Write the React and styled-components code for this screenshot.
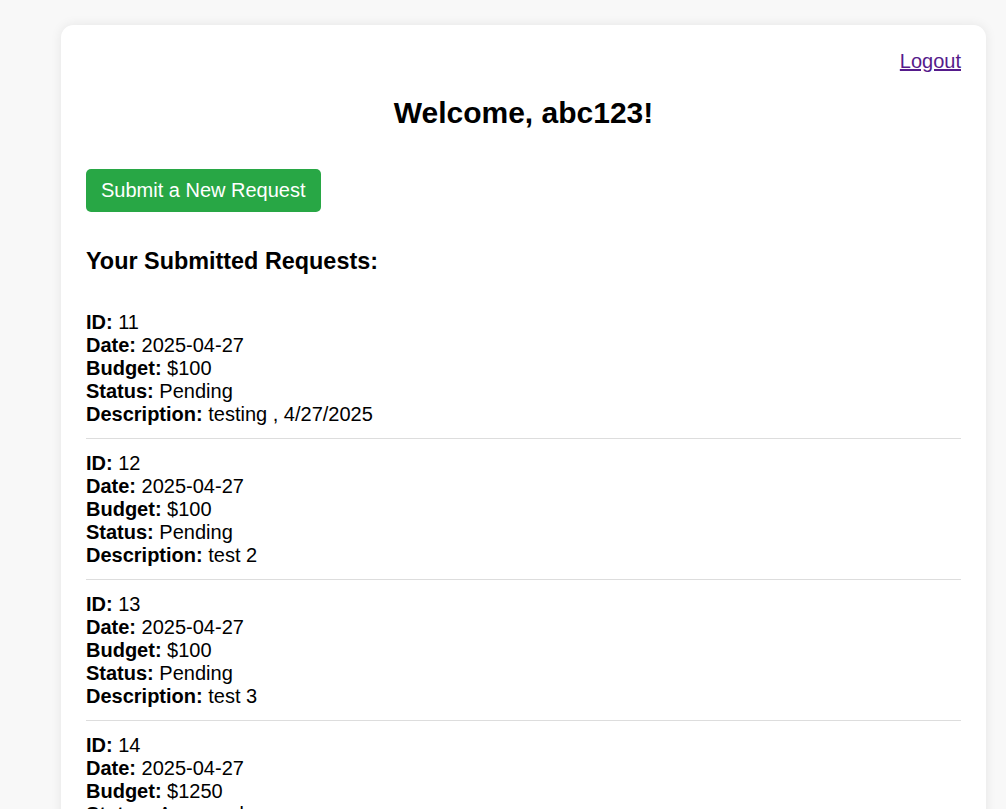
import styled, { createGlobalStyle } from "styled-components";

const GlobalStyle = createGlobalStyle`
  body {
    margin: 0;
    background: #f8f8f8;
    font-family: "Liberation Sans", Arial, sans-serif;
    font-size: 20px;
    color: #000;
  }
`;

const Page = styled.div`
  padding: 25px 20px 0 61px;
`;

const Card = styled.div`
  background: #fff;
  border-radius: 12.5px;
  box-shadow: 0 0 12px rgba(0, 0, 0, 0.08);
  padding: 25px;
  min-height: 900px;
`;

const TopBar = styled.div`
  display: flex;
  justify-content: flex-end;
`;

const LogoutLink = styled.a`
  color: #551a8b;
  text-decoration: underline;
  cursor: pointer;
`;

const Heading = styled.h2`
  text-align: center;
  font-size: 30px;
  margin: 22.5px 0 0;
`;

const SubmitButton = styled.button`
  margin-top: 39px;
  background: #28a745;
  color: #fff;
  border: none;
  border-radius: 5px;
  padding: 10px 15px;
  font-family: inherit;
  font-size: 20px;
  line-height: 23px;
  cursor: pointer;
`;

const SectionTitle = styled.h3`
  font-size: 23.4px;
  margin: 36px 0 24px;
`;

const RequestList = styled.ul`
  list-style: none;
  margin: 0;
  padding: 0;
`;

const RequestItem = styled.li`
  padding: 12.5px 0 12px;
  border-bottom: 1px solid #ddd;
  line-height: 23px;
  & + & {
    padding-top: 13px;
  }
`;

const Field = styled.div`
  strong {
    font-weight: bold;
  }
`;

const requests = [
  { id: 11, date: "2025-04-27", budget: "$100", status: "Pending", description: "testing , 4/27/2025" },
  { id: 12, date: "2025-04-27", budget: "$100", status: "Pending", description: "test 2" },
  { id: 13, date: "2025-04-27", budget: "$100", status: "Pending", description: "test 3" },
  { id: 14, date: "2025-04-27", budget: "$1250", status: "Approved", description: "test 4" },
];

const App = () => (
  <Page>
    <GlobalStyle />
    <Card>
      <TopBar>
        <LogoutLink>Logout</LogoutLink>
      </TopBar>
      <Heading>Welcome, abc123!</Heading>
      <SubmitButton>Submit a New Request</SubmitButton>
      <SectionTitle>Your Submitted Requests:</SectionTitle>
      <RequestList>
        {requests.map((r) => (
          <RequestItem key={r.id}>
            <Field><strong>ID:</strong> {r.id}</Field>
            <Field><strong>Date:</strong> {r.date}</Field>
            <Field><strong>Budget:</strong> {r.budget}</Field>
            <Field><strong>Status:</strong> {r.status}</Field>
            <Field><strong>Description:</strong> {r.description}</Field>
          </RequestItem>
        ))}
      </RequestList>
    </Card>
  </Page>
);

export default App;
